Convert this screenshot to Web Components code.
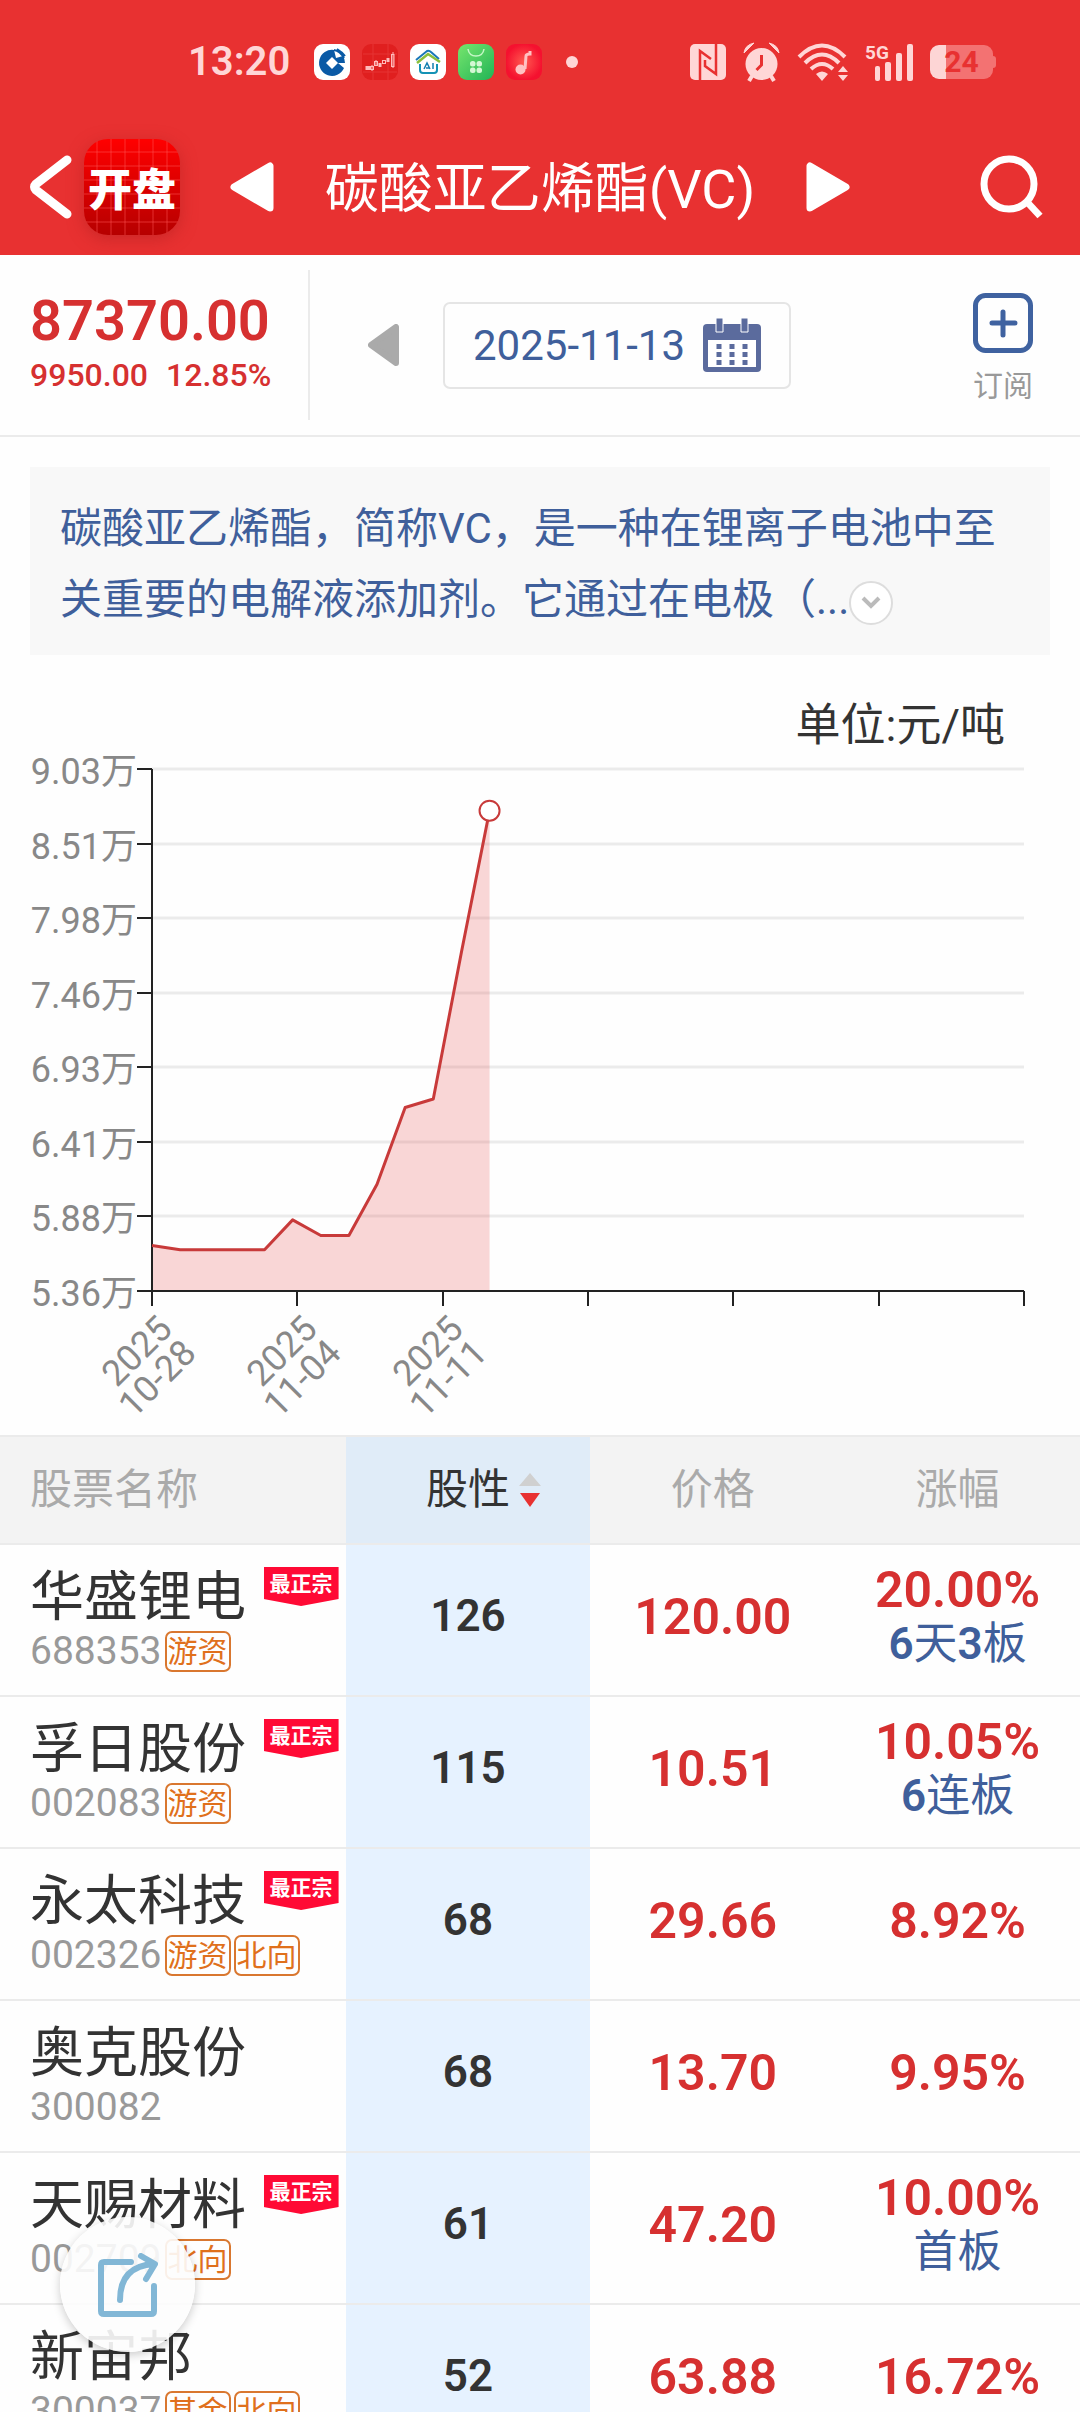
<!DOCTYPE html>
<html lang="zh-CN">
<head>
<meta charset="utf-8">
<meta name="viewport" content="width=device-width, initial-scale=1">
<title>碳酸亚乙烯酯(VC)</title>
<style>
   html, body {
      margin: 0;
      height: 100%;
      background: #fefefe;
      overflow: hidden;
   }
   body {
      --red: #e83131;
      --up: #d63030;
      --blue: #3f5f9b;
      --line: #ebebeb;
      --ink: #333;
      --muted: #999;
      font-family: Roboto, "Noto Sans CJK SC", sans-serif;
      color: var(--ink);
   }
</style>
</head>
<body>
<app-page>
   <status-bar slot="top" time="13:20" battery="24"></status-bar>
   <nav-header slot="top">碳酸亚乙烯酯(VC)</nav-header>
   <quote-bar price="87370.00" change="9950.00" percent="12.85%" date="2025-11-13"></quote-bar>
   <intro-card>碳酸亚乙烯酯，简称VC，是一种在锂离子电池中至关重要的电解液添加剂。它通过在电极（...</intro-card>
   <price-chart unit="单位:元/吨"></price-chart>
   <stock-table></stock-table>
   <share-button slot="float"></share-button>
</app-page>

<script>
function define(name, html, setup)
{
   const template = document.createElement('template');
   template.innerHTML = html;

   customElements.define(name, class extends HTMLElement
   {
      connectedCallback()
      {
         if (this.shadowRoot) return;
         const root = this.attachShadow({ mode: 'open' });
         root.appendChild(template.content.cloneNode(true));
         root.querySelectorAll('[data-attr]').forEach(el => {
            el.textContent = this.getAttribute(el.dataset.attr);
         });
         if (setup) setup(root, this);
      }
   });
}

define('app-page', `
   <style>
      :host {
         display: flex;
         flex-direction: column;
         height: 100vh;
      }
      header { flex: none; background: var(--red); }
      main {
         flex: 1;
         min-height: 0;
         overflow-y: auto;
         scrollbar-width: none;
      }
   </style>
   <header><slot name="top"></slot></header>
   <main><slot></slot></main>
   <slot name="float"></slot>
`);

define('status-bar', `
   <style>
      :host {
         display: flex;
         align-items: center;
         height: 124px;
         padding: 0 84px 0 188px;
         color: #ffd6d6;
      }
      .time { font-size: 40px; line-height: 48px; font-weight: 600; }
      .apps { display: flex; align-items: center; gap: 12px; margin-left: 24px; }
      .system { display: flex; align-items: center; gap: 17px; margin-left: auto; }
      .dot { width: 12px; height: 12px; border-radius: 50%; background: currentColor; margin-left: 12px; }
      svg { display: block; overflow: visible; }
      .battery {
         display: grid;
         place-items: center;
         width: 63px;
         height: 34px;
         margin-right: 3px;
         border-radius: 9px;
         background: linear-gradient(to right, #fdd5d5 26%, #f37272 26%);
         color: var(--red);
         font-size: 30px;
         line-height: 34px;
         font-weight: 700;
         position: relative;
      }
      .battery::after {
         content: "";
         position: absolute;
         right: -3px;
         top: 11px;
         width: 3px;
         height: 12px;
         border-radius: 0 3px 3px 0;
         background: #f37272;
      }
   </style>
   <span class="time" data-attr="time"></span>
   <div class="apps">
      <svg width="36" height="36" viewBox="0 0 36 36">
         <rect width="36" height="36" rx="9" fill="#fff"/>
         <path d="M20 6a13 13 0 1 0 10 18l-6-5h7a13 13 0 0 0-2-7l-7 2z" fill="#0a5aa6"/>
         <path d="M18 13l6 6-6 6-6-6z" fill="#fff"/>
         <path d="M20 6q6 1 10 8M23 5q5 3 8 7" stroke="#0a5aa6" stroke-width="2" fill="none"/>
      </svg>
      <svg width="36" height="36" viewBox="0 0 36 36">
         <rect width="36" height="36" rx="9" fill="#e01f1f"/>
         <path d="M1 10h34M1 28h34M11 0v36M26 0v36" stroke="#e63535"/>
         <path d="M5 22v4M7 22v4M18 19v4M26 14v4" stroke="#fbb" stroke-width="3"/>
         <g fill="none" stroke="#fbb"><rect x="8.500" y="22.500" width="3" height="3"/><rect x="12.500" y="17.500" width="3" height="4"/><rect x="20.500" y="16.500" width="3" height="3"/><rect x="29.500" y="10.500" width="2.500" height="12"/><path d="M10 21v6M14 16v6M31 8v16"/></g>
      </svg>
      <svg width="36" height="36" viewBox="0 0 36 36">
         <rect width="36" height="36" rx="9" fill="#fff"/>
         <path d="M6 16L17 7q2-1 4 1l8 7" fill="none" stroke="#1a77b8" stroke-width="2"/>
         <path d="M7 19l11-9 12 8" fill="none" stroke="#8abf3c" stroke-width="2.500"/>
         <path d="M10 20v6q0 3 3 3h11q3 0 3-3v-6" fill="none" stroke="#1492b5" stroke-width="2"/>
         <path d="M14 25l3-6 3 6M16 24h3M23 19v6" fill="none" stroke="#157fb0" stroke-width="1.500"/>
      </svg>
      <svg width="36" height="36" viewBox="0 0 36 36">
         <defs><linearGradient id="g" x2="1" y2="1"><stop stop-color="#76e56d"/><stop offset="1" stop-color="#21b456"/></linearGradient></defs>
         <rect width="36" height="36" rx="9" fill="url(#g)"/>
         <path d="M10 5q1 7 8 7t8-7" fill="none" stroke="#c4f7c6" stroke-width="1.500"/>
         <g fill="#d3f8d4"><rect x="12" y="17" width="5.500" height="5.500" rx="2.500"/><rect x="18.500" y="17" width="5.500" height="5.500" rx="2.500"/><rect x="12" y="23.500" width="5.500" height="5.500" rx="2.500"/><rect x="18.500" y="23.500" width="5.500" height="5.500" rx="2.500"/></g>
      </svg>
      <svg width="36" height="36" viewBox="0 0 36 36">
         <defs><radialGradient id="m"><stop stop-color="#ff5a50"/><stop offset="1" stop-color="#f5112f"/></radialGradient></defs>
         <rect width="36" height="36" rx="9" fill="url(#m)"/>
         <path d="M24 7v3q-4 0-4 2l-1 13" fill="none" stroke="#ffc2c2" stroke-width="3"/>
         <circle cx="14.500" cy="25.500" r="5" fill="#ffc2c2"/>
      </svg>
      <span class="dot"></span>
   </div>
   <div class="system">
      <svg width="36" height="36" viewBox="0 0 36 36" fill="none">
         <rect width="36" height="36" rx="5" fill="currentColor"/>
         <path d="M10 36V7l11 8M26 0v30l-11-8V16" stroke="#e83131" stroke-width="2.500"/>
      </svg>
      <svg width="37" height="38" viewBox="0 0 37 38" fill="currentColor">
         <circle cx="18.500" cy="21" r="16"/>
         <path d="M1 10q1-8 10-10zM36 10q-1-8-10-10z" stroke="currentColor" stroke-linejoin="round"/>
         <path d="M9 33l-3 5M28 33l3 5" stroke="currentColor" stroke-width="4"/>
         <path d="M18.500 12v10l-5 5" fill="none" stroke="#e83131" stroke-width="3"/>
      </svg>
      <svg width="51" height="38" viewBox="0 0 51 38" fill="none" stroke="currentColor" stroke-width="4">
         <path d="M2 14Q25-9 48 14M8 20Q25 3 42 20M14 26q11-10 22 0"/>
         <path d="M19 31l6 7 6-7q-6-5-12 0zM41 29l5-6 5 6zM41 32l5 6 5-6z" fill="currentColor" stroke="none"/>
      </svg>
      <svg width="48" height="38" viewBox="0 0 48 38" fill="currentColor">
         <text x="0" y="16" font-size="19" font-weight="700">5G</text>
         <rect x="10" y="23" width="5" height="15" rx="2"/><rect x="20" y="19" width="6" height="19" rx="2"/><rect x="31" y="10" width="6" height="28" rx="2"/><rect x="42" y="1" width="6" height="37" rx="2"/>
      </svg>
      <span class="battery" data-attr="battery"></span>
   </div>
`);

define('nav-header', `
   <style>
      :host {
         display: grid;
         grid-template-columns: 1fr auto 1fr;
         align-items: center;
         height: 126px;
         padding: 0 30px 5px;
         color: #fff;
      }
      button { display: block; padding: 0; border: 0; background: none; color: inherit; }
      svg { display: block; }
      .left { display: flex; align-items: center; gap: 12px; }
      .logo {
         display: grid;
         place-items: center;
         width: 96px;
         height: 96px;
         border-radius: 24px;
         background:
            repeating-linear-gradient(to right, transparent 0 12px, #ff555544 12px 14px),
            repeating-linear-gradient(to bottom, transparent 0 12px, #ff555544 12px 14px),
            linear-gradient(#ff0000, #b60000);
         box-shadow: 0 4px 16px #b0202088;
         font-size: 44px;
         font-weight: 900;
      }
      .title { display: flex; align-items: center; gap: 51px; }
      h1 { margin: 0; padding-top: 6px; font-size: 54px; line-height: 72px; font-weight: 400; white-space: nowrap; }
      .search { justify-self: end; }
   </style>
   <div class="left">
      <button aria-label="返回">
         <svg width="42" height="64" viewBox="0 0 42 64" fill="none" stroke="currentColor" stroke-width="9" stroke-linecap="round" stroke-linejoin="round"><path d="M37 5L6 29q-3 3 0 6l31 24"/></svg>
      </button>
      <div class="logo">开盘</div>
   </div>
   <div class="title">
      <button aria-label="上一个">
         <svg width="44" height="50" viewBox="0 0 44 50"><path d="M4 25L40 4v42z" fill="currentColor" stroke="currentColor" stroke-width="7" stroke-linejoin="round"/></svg>
      </button>
      <h1><slot></slot></h1>
      <button aria-label="下一个">
         <svg width="44" height="50" viewBox="0 0 44 50"><path d="M40 25L4 4v42z" fill="currentColor" stroke="currentColor" stroke-width="7" stroke-linejoin="round"/></svg>
      </button>
   </div>
   <button class="search" aria-label="搜索">
      <svg width="70" height="64" viewBox="0 0 70 64" fill="none" stroke="currentColor" stroke-width="7"><circle cx="29" cy="29" r="25"/><path d="M48 48l12 13"/></svg>
   </button>
`);

define('quote-bar', `
   <style>
      :host {
         display: flex;
         align-items: center;
         height: 180px;
         border-bottom: 2px solid var(--line);
      }
      .price {
         box-sizing: border-box;
         width: 310px;
         height: 150px;
         padding: 18px 0 0 30px;
         border-right: 2px solid var(--line);
         color: var(--up);
         font-weight: 500;
      }
      .now { font-size: 56px; line-height: 66px; font-weight: 600; }
      .diff { display: flex; gap: 18px; font-size: 32px; line-height: 42px; }
      button { padding: 0; border: 0; background: none; font: inherit; }
      svg { display: block; }
      .prev { margin: 0 44px 0 58px; }
      .date {
         display: flex;
         align-items: center;
         gap: 18px;
         height: 87px;
         padding: 0 28px;
         border: 2px solid #e5e5e5;
         border-radius: 7px;
         color: var(--blue);
         font-size: 42px;
      }
      .follow {
         display: grid;
         justify-items: center;
         gap: 12px;
         margin: 0 47px 0 auto;
         padding-top: 10px;
         color: var(--muted);
         font-size: 30px;
         line-height: 42px;
      }
   </style>
   <div class="price">
      <div class="now" data-attr="price"></div>
      <div class="diff"><span data-attr="change"></span><span data-attr="percent"></span></div>
   </div>
   <button class="prev" aria-label="前一天">
      <svg width="31" height="42" viewBox="0 0 31 42"><path d="M3 21L28 3v36z" fill="#aaa" stroke="#aaa" stroke-width="6" stroke-linejoin="round"/></svg>
   </button>
   <button class="date">
      <span data-attr="date"></span>
      <svg width="58" height="54" viewBox="0 0 58 54">
         <path d="M4 6h50q4 0 4 4v40q0 4-4 4H4q-4 0-4-4V10q0-4 4-4z" fill="#5b6b9d"/>
         <path d="M5 22h48v27H5z" fill="#fff"/>
         <path d="M13 0h7v14h-7zM38 0h7v14h-7z" fill="#5b6b9d" stroke="#fff"/>
         <path d="M16 26v21M29 26v21M42 26v21" stroke="#5b6b9d" stroke-width="5" stroke-dasharray="5 3"/>
      </svg>
   </button>
   <button class="follow">
      <svg width="60" height="60" viewBox="0 0 60 60" fill="none" stroke="#3f62a0" stroke-width="5"><rect x="2.500" y="2.500" width="55" height="55" rx="10"/><path d="M30 19v23M19 30h23" stroke-linecap="round"/></svg>
      <span>订阅</span>
   </button>
`);

define('intro-card', `
   <style>
      :host {
         display: block;
         margin: 30px 30px 0;
         padding: 26px 30px 20px;
         background: #f8f8f8;
         color: var(--blue);
         font-size: 42px;
         line-height: 71px;
      }
      p { margin: 0; }
      button {
         display: inline-grid;
         place-items: center;
         width: 44px;
         height: 44px;
         padding: 0;
         border: 2px solid #ddd;
         border-radius: 50%;
         background: #fff;
         vertical-align: middle;
      }
   </style>
   <p><slot></slot><button aria-label="展开"><svg width="20" height="14" viewBox="0 0 20 14" fill="none" stroke="#bbb" stroke-width="4"><path d="M2 2l8 8 8-8"/></svg></button></p>
`);

const PRICES = [56800, 56500, 56500, 56500, 56500, 58600, 57500, 57500, 61100, 66500, 67100, 77420, 87370];
const Y_LABELS = ['9.03万', '8.51万', '7.98万', '7.46万', '6.93万', '6.41万', '5.88万', '5.36万'];
const X_LABELS = [['2025', '10-28'], ['2025', '11-04'], ['2025', '11-11']];

define('price-chart', `
   <style>
      :host { display: block; padding-top: 41px; }
      .unit { padding-right: 75px; text-align: right; font-size: 45px; line-height: 60px; }
      svg { display: block; width: 100%; overflow: visible; }
      text { fill: #888; text-anchor: end; }
      .y, .x { font-size: 36px; }
      .grid { stroke: #ebebeb; stroke-width: 3; }
      .axis { stroke: #222; stroke-width: 2; }
      .area { fill: #e4393533; }
      .line { fill: none; stroke: #c83a3a; stroke-width: 3; stroke-linejoin: round; }
      circle { fill: #fff; stroke: #c83a3a; stroke-width: 2; }
   </style>
   <div class="unit" data-attr="unit"></div>
   <svg viewBox="0 0 1080 679"></svg>
`, root => {
   const left = 152, top = 13, width = 872, height = 522;
   const bottom = top + height, right = left + width;
   const low = 53600, high = 90300, days = 31;
   const px = i => left + i * width / days;
   const py = v => bottom - (v - low) / (high - low) * height;
   const line = (cls, x1, y1, x2, y2) => `<path class="${cls}" d="M${x1} ${y1}L${x2} ${y2}"/>`;

   let out = '';
   Y_LABELS.forEach((label, i) => {
      const y = Math.round(top + i * height / 7);
      if (y < bottom) out += line('grid', left, y, right, y);
      out += line('axis', left - 15, y, left, y);
      out += `<text class="y" x="${left - 15}" y="${y + 15}">${label}</text>`;
   });

   const points = PRICES.map((v, i) => `${px(i)},${py(v)}`).join(' ');
   const last = PRICES.length - 1;
   out += `<polygon class="area" points="${left},${bottom} ${points} ${px(last)},${bottom}"/>`;
   out += line('axis', left, top, left, bottom) + line('axis', left, bottom, right, bottom);

   for (let i = 0; i <= 6; i++)
   {
      const x = Math.round(left + i * width / 6);
      out += line('axis', x, bottom, x, bottom + 15);
      if (!X_LABELS[i]) continue;
      out += `<text class="x" transform="translate(${x + 22} ${bottom + 40}) rotate(-45)">
         <tspan x="0">${X_LABELS[i][0]}</tspan><tspan x="0" dy="34">${X_LABELS[i][1]}</tspan></text>`;
   }

   out += `<polyline class="line" points="${points}"/>`;
   out += `<circle cx="${px(last)}" cy="${py(PRICES[last])}" r="10"/>`;
   root.querySelector('svg').innerHTML = out;
});

define('top-badge', `
   <style>
      :host {
         display: block;
         box-sizing: border-box;
         height: 39px;
         padding: 0 6px;
         background: #ff0a35;
         clip-path: polygon(0 0, 100% 0, 100% 82%, 50% 100%, 0 82%);
         color: #fff;
         font-size: 21px;
         line-height: 34px;
         font-weight: 700;
         white-space: nowrap;
      }
   </style>
   <slot></slot>
`);

define('fund-tag', `
   <style>
      :host {
         display: block;
         padding: 0 1px;
         border: 2px solid #d9772f;
         border-radius: 7px;
         color: #e0701c;
         font-size: 30px;
         line-height: 37px;
      }
   </style>
   <slot></slot>
`);

const STOCKS = [
   { name: '华盛锂电', code: '688353', top: true, tags: ['游资'], score: 126, price: '120.00', rise: '20.00%', streak: '6天3板' },
   { name: '孚日股份', code: '002083', top: true, tags: ['游资'], score: 115, price: '10.51', rise: '10.05%', streak: '6连板' },
   { name: '永太科技', code: '002326', top: true, tags: ['游资', '北向'], score: 68, price: '29.66', rise: '8.92%' },
   { name: '奥克股份', code: '300082', tags: [], score: 68, price: '13.70', rise: '9.95%' },
   { name: '天赐材料', code: '002709', top: true, tags: ['北向'], score: 61, price: '47.20', rise: '10.00%', streak: '首板' },
   { name: '新宙邦', code: '300037', tags: ['基金', '北向'], score: 52, price: '63.88', rise: '16.72%' },
];

define('stock-table', `
   <style>
      :host { display: block; }
      table {
         width: 100%;
         table-layout: fixed;
         border-collapse: separate;
         border-spacing: 0;
         text-align: center;
      }
      .first { width: 32%; }
      th, td { box-sizing: border-box; padding: 0; border-bottom: 2px solid var(--line); }
      th {
         height: 110px;
         border-top: 2px solid var(--line);
         background: #f3f3f3;
         color: #aaa;
         font-size: 42px;
         line-height: 60px;
         font-weight: 400;
      }
      th:first-child { padding-left: 30px; text-align: left; }
      th:nth-child(2) { background: #e0ecf8; }
      th button {
         display: inline-flex;
         align-items: center;
         gap: 8px;
         padding: 0 0 0 32px;
         border: 0;
         background: none;
         color: var(--ink);
         font: inherit;
      }
      td { height: 152px; padding-bottom: 6px; color: var(--up); font-size: 50px; line-height: 54px; font-weight: 600; }
      td:first-child { padding: 0 7px 0 30px; text-align: left; color: var(--ink); font-weight: 400; }
      td:nth-child(2) { padding-bottom: 8px; background: #e6f2ff; color: var(--ink); font-size: 44px; }
      .name { display: flex; justify-content: space-between; align-items: flex-start; font-size: 54px; line-height: 62px; }
      .code { display: flex; align-items: center; gap: 3px; color: var(--muted); font-size: 39px; line-height: 44px; }
      .streak { color: var(--blue); font-size: 44px; font-weight: 400; }
      .streak b { font-weight: 600; }
   </style>
   <table>
      <colgroup><col class="first"><col><col><col></colgroup>
      <thead>
         <tr>
            <th scope="col">股票名称</th>
            <th scope="col"><button>股性<svg width="24" height="34" viewBox="0 0 24 34"><path d="M12 0l11 13H1z" fill="#d0d0d0"/><path d="M2 20h20L12 34z" fill="#e83131"/></svg></button></th>
            <th scope="col">价格</th>
            <th scope="col">涨幅</th>
         </tr>
      </thead>
      <tbody></tbody>
   </table>
`, root => {
   root.querySelector('tbody').innerHTML = STOCKS.map(s => `
      <tr>
         <td>
            <div class="name"><span>${s.name}</span>${s.top ? '<top-badge>最正宗</top-badge>' : ''}</div>
            <div class="code"><span>${s.code}</span>${s.tags.map(t => `<fund-tag>${t}</fund-tag>`).join('')}</div>
         </td>
         <td>${s.score}</td>
         <td>${s.price}</td>
         <td>${s.rise}${s.streak ? `<div class="streak">${s.streak.replace(/\d/g, '<b>$&</b>')}</div>` : ''}</td>
      </tr>`).join('');
});

define('share-button', `
   <style>
      :host { position: fixed; left: 60px; bottom: 60px; }
      button {
         display: grid;
         place-items: center;
         width: 135px;
         height: 135px;
         padding: 0;
         border: 0;
         border-radius: 50%;
         background: #fdfdfde6;
         box-shadow: 0 3px 10px #0003;
      }
   </style>
   <button aria-label="分享">
      <svg width="60" height="64" viewBox="0 0 60 64" fill="none" stroke="#82b7d6" stroke-width="6" stroke-linecap="round" stroke-linejoin="round">
         <path d="M33 9H6q-3 0-3 3v46q0 3 3 3h47q3 0 3-3V33"/>
         <path d="M22 47Q22 13 56 11M43 3l14 8-9 15"/>
      </svg>
   </button>
`);
</script>
</body>
</html>
